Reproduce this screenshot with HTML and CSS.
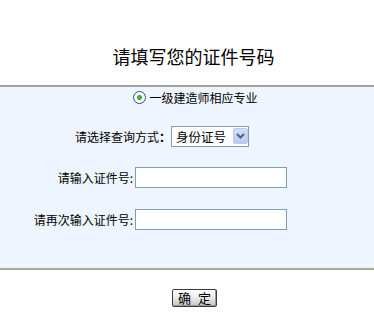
FILE: index.html
```html
<!DOCTYPE html>
<html lang="zh-CN">
<head>
<meta charset="utf-8">
<title>请填写您的证件号码</title>
<link rel="stylesheet" href="styles.css">
</head>
<body>
<h1 class="title">请填写您的证件号码</h1>
<form class="panel">
  <label class="radio-row">
    <input class="radio" type="radio" name="zy" checked>
    <span>一级建造师相应专业</span>
  </label>
  <div class="select-row">
    <span class="select-label">请选择查询方式<b>：</b></span>
    <span class="select-wrap">
      <select class="select">
        <option>身份证号</option>
      </select>
      <span class="select-btn">
        <svg width="9" height="6" viewBox="0 0 9 6"><path d="M1 1 L4.5 4.5 L8 1" fill="none" stroke="#4d6185" stroke-width="2"/></svg>
      </span>
    </span>
  </div>
  <div class="fields">
    <span class="field-label">请输入证件号:</span>
    <input class="field" type="text">
    <span class="field-label">请再次输入证件号:</span>
    <input class="field" type="text">
  </div>
</form>
<div class="actions">
  <button class="btn" type="button">确 定</button>
</div>
</body>
</html>
```

FILE: styles.css
```css
html, body {
  margin: 0;
  padding: 0;
  background: #ffffff;
}
body {
  width: 374px;
  font-family: "Noto Sans CJK SC", "Noto Sans", sans-serif;
  color: #000;
  font-size: 12px;
}
.title {
  margin: 46px 0 0 0;
  padding: 0 0 19px 13px;
  font-size: 18px;
  line-height: 20px;
  font-weight: normal;
  text-align: center;
}
.panel {
  margin: 0;
  border-top: 2px solid #a3a3a3;
  border-bottom: 2px solid #a9a997;
  background: #eef5fe;
  padding: 4px 0 38px 0;
}
.radio-row {
  display: flex;
  align-items: center;
  justify-content: center;
  padding-left: 17px;
  height: 13px;
  line-height: 13px;
  gap: 3px;
}
.radio {
  appearance: none;
  -webkit-appearance: none;
  width: 13px;
  height: 13px;
  margin: 0;
  border: 1px solid #1c5180;
  border-radius: 50%;
  background: radial-gradient(circle, #3bb33b 0 2.2px, #ffffff 2.8px);
  box-sizing: border-box;
}
.select-row {
  display: flex;
  align-items: center;
  padding-left: 75px;
  margin-top: 22px;
  height: 21px;
  gap: 0;
}
.select-label {
  line-height: 21px;
  white-space: nowrap;
}
.select-label b {
  font-weight: bold;
}
.select-wrap {
  position: relative;
  display: block;
  width: 78px;
  height: 21px;
}
.select {
  appearance: none;
  -webkit-appearance: none;
  width: 78px;
  height: 21px;
  margin: 0;
  padding: 0 0 0 4px;
  border: 1px solid #7f9db9;
  background: #ffffff;
  font-family: "Noto Sans CJK SC", "Noto Sans", sans-serif;
  font-size: 12.5px;
  line-height: 19px;
  color: #000;
  box-sizing: border-box;
  border-radius: 0;
}
.select-btn {
  position: absolute;
  right: 1px;
  top: 2px;
  width: 15px;
  height: 16px;
  box-sizing: border-box;
  border: 1px solid #bccbef;
  border-radius: 2px;
  background: linear-gradient(#d4defa, #b9caf4);
  display: flex;
  align-items: center;
  justify-content: center;
  pointer-events: none;
}
.fields {
  display: grid;
  grid-template-columns: 133px 152px;
  column-gap: 2px;
  row-gap: 21px;
  margin-top: 20px;
  align-items: center;
}
.field-label {
  text-align: right;
  line-height: 21px;
  white-space: nowrap;
}
.field {
  width: 152px;
  height: 21px;
  margin: 0;
  padding: 0 2px;
  border: 1px solid #7f9db9;
  background: #ffffff;
  box-sizing: border-box;
  border-radius: 0;
  font-size: 12px;
}
.actions {
  display: flex;
  justify-content: center;
  padding: 19px 0 0 15px;
}
.btn {
  width: 45px;
  height: 18px;
  margin: 0;
  padding: 0;
  border: 1px solid #3c3c3c;
  border-radius: 2px;
  background: linear-gradient(#ffffff, #ececec 45%, #c4c4c4);
  box-shadow: inset -1px -1px 0 #9a9a9a;
  font-family: "Noto Sans CJK SC", "Noto Sans", sans-serif;
  font-size: 13px;
  line-height: 16px;
  word-spacing: 4px;
  color: #000;
  white-space: pre;
}
```
